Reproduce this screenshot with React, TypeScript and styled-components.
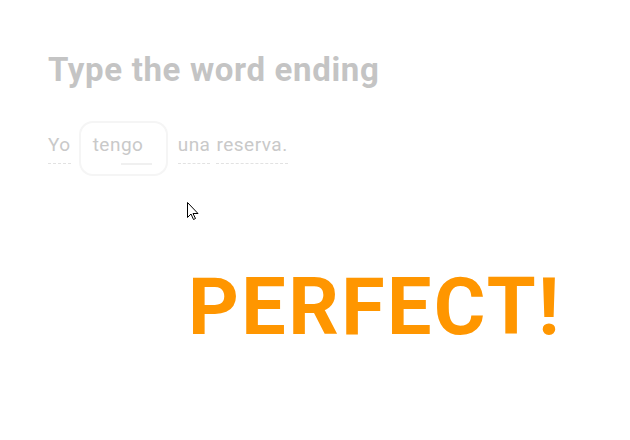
import React from "react";
import styled, { createGlobalStyle } from "styled-components";

const Global = createGlobalStyle`
  html, body { margin: 0; padding: 0; background: #ffffff; }
  body { font-family: Roboto, "Noto Sans", sans-serif; }
`;

const Page = styled.div`
  position: relative;
  width: 630px;
  height: 440px;
  box-sizing: border-box;
  padding: 48px 0 0 48px;
  display: flex;
  flex-direction: column;
  overflow: hidden;
`;

const Title = styled.h1`
  margin: 0;
  font-family: Roboto, sans-serif;
  font-weight: 700;
  font-size: 33px;
  line-height: 44px;
  color: #c4c4c4;
  letter-spacing: 0.65px;
`;

const Sentence = styled.div`
  margin-top: 29px;
  display: flex;
  align-items: center;
  font-family: Roboto, sans-serif;
  font-size: 19px;
  letter-spacing: 0.5px;
  color: #c9c9c9;
`;

const Word = styled.span<{ $gap?: number }>`
  margin-right: ${(p) => p.$gap ?? 6}px;
  line-height: 24px;
  padding-bottom: 6px;
  border-bottom: 1px dashed #e2e2e2;
`;

const InputBox = styled.div`
  box-sizing: border-box;
  width: 89px;
  height: 55px;
  margin: 0 10px 0 8px;
  border: 2px solid #f5f5f5;
  border-radius: 14px;
  display: flex;
  align-items: flex-start;
  padding: 10px 0 0 12px;
`;

const Prefix = styled.span`
  line-height: 24px;
`;

const Typed = styled.span`
  line-height: 24px;
  padding: 0 9px 6px 0;
  border-bottom: 2px solid #f0f0f0;
`;

const Perfect = styled.div`
  margin-top: 91px;
  margin-left: 140px;
  font-family: Roboto, sans-serif;
  font-weight: 700;
  font-size: 79px;
  line-height: 80px;
  letter-spacing: 2.4px;
  color: #ff9600;
`;

const Cursor = styled.svg`
  position: absolute;
  left: 187px;
  top: 202px;
`;

export default function App() {
  return (
    <>
      <Global />
      <Page>
        <Title>Type the word ending</Title>
        <Sentence>
          <Word $gap={0}>Yo</Word>
          <InputBox>
            <Prefix>ten</Prefix>
            <Typed>go</Typed>
          </InputBox>
          <Word $gap={6}>una</Word>
          <Word $gap={0}>reserva.</Word>
        </Sentence>
        <Perfect>PERFECT!</Perfect>
        <Cursor width="12" height="19" viewBox="0 0 12 19">
          <path
            d="M0.5 0.5 L0.5 15.5 L4 12 L6.5 17.5 L8.5 16.5 L6 11.5 L11 11.5 Z"
            fill="#ffffff"
            stroke="#000000"
            strokeWidth="1"
            strokeLinejoin="miter"
          />
        </Cursor>
      </Page>
    </>
  );
}
